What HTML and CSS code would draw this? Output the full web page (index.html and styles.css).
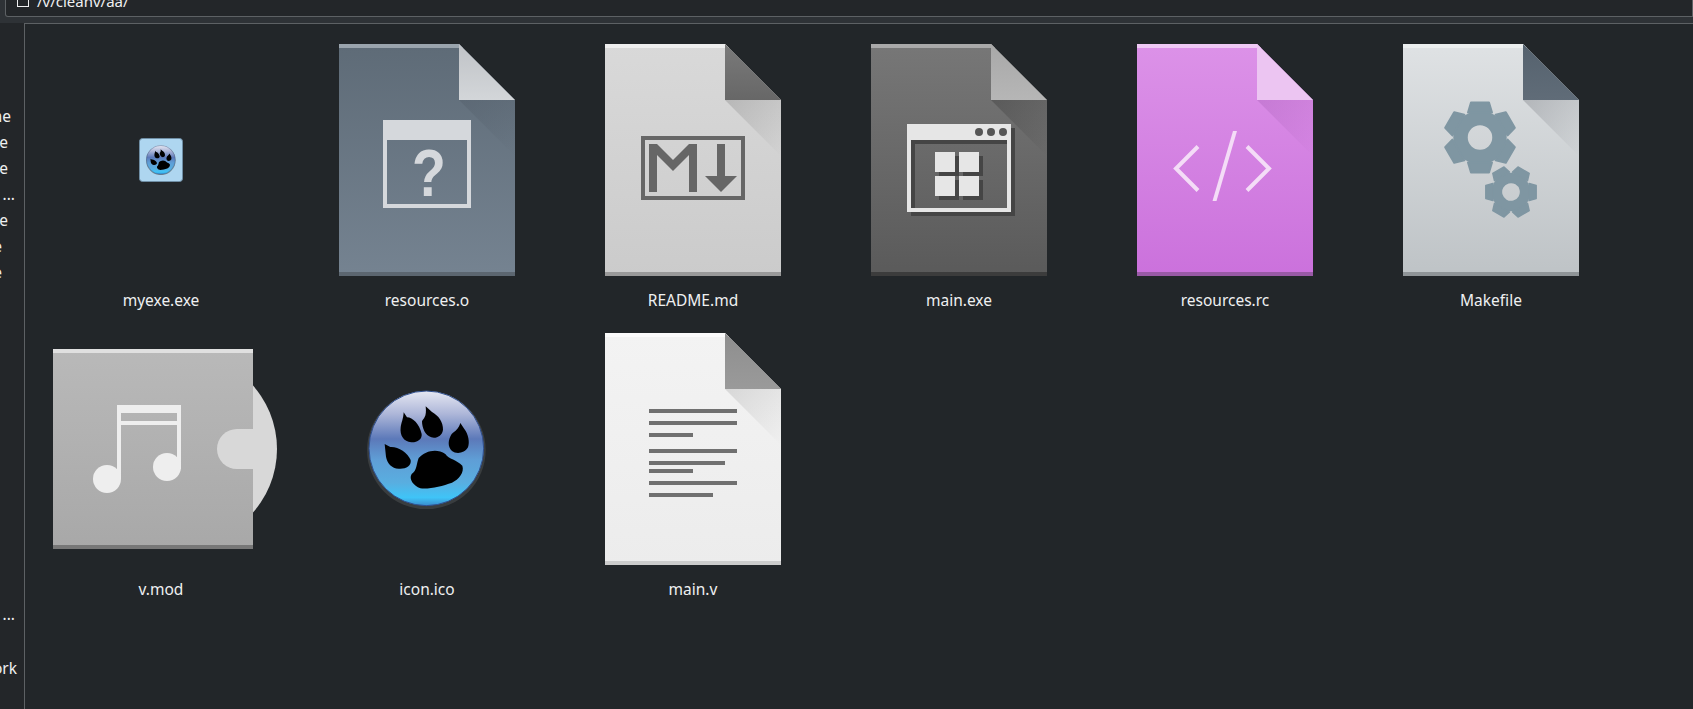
FILE: index.html
```html
<!DOCTYPE html>
<html lang="en">
<head>
  <meta charset="UTF-8" />
  <meta name="viewport" content="width=device-width, initial-scale=1.0" />
  <title>aa</title>
  <link rel="stylesheet" href="styles.css">
</head>
<body>
  <header class="topbar">
    <div class="pathbar">
      <span class="path-check"></span>
      <span class="path-text">/v/cleanv/aa/</span>
    </div>
  </header>

  <div class="content">
    <nav class="sidebar">
      <div class="side-top">
        <div class="side-item end-11">Home</div>
        <div class="side-item end-8">Archive</div>
        <div class="side-item end-8">Trace</div>
        <div class="side-item end-15">...</div>
        <div class="side-item end-8">Save</div>
        <div class="side-item end-2">Share</div>
        <div class="side-item end-2">Store</div>
      </div>
      <div class="side-bottom">
        <div class="side-item end-15">...</div>
        <div class="side-item end-7 side-gap">Network</div>
      </div>
    </nav>

    <main class="files">
      <div class="file">
        <div class="file-icon">
          <svg width="44" height="44" viewBox="0 0 44 44">
            <defs>
              <linearGradient id="paw-glass" gradientUnits="userSpaceOnUse" x1="0" y1="60" x2="0" y2="405">
                <stop offset="0" stop-color="#e6e8f2"/>
                <stop offset="0.2" stop-color="#aeb7d9"/>
                <stop offset="0.42" stop-color="#5c79b9"/>
                <stop offset="0.6" stop-color="#5f9ed6"/>
                <stop offset="0.8" stop-color="#59aee0"/>
                <stop offset="0.93" stop-color="#3fc4f7"/>
                <stop offset="1" stop-color="#3a8ccc"/>
              </linearGradient>
              <symbol id="paw" viewBox="50 55 360 360">
                <circle cx="228" cy="238" r="178" fill="#4a4c4e" opacity="0.6"/>
                <circle cx="228" cy="233" r="172" fill="url(#paw-glass)" stroke="#30508f" stroke-width="3"/>
                <path fill="#000" d="M160 125L170 140C187 140 207 160 214 190C216 206 200 216 183 215C160 213 148 195 151 170C153 155 159 145 160 125Z"/>
                <path fill="#000" d="M226 107L245 124C264 134 279 155 278 177C276 196 258 204 243 200C225 195 215 172 215 152C219 144 230 140 226 107Z"/>
                <path fill="#000" d="M330 157L342 175C354 190 359 215 353 230C343 248 318 251 305 241C291 228 293 208 304 190C315 180 325 175 330 157Z"/>
                <path fill="#000" d="M103 220L120 229C142 227 172 245 181 268C184 286 165 296 145 294C124 293 111 278 107 258Z"/>
                <path fill="#000" d="M205 262C225 240 260 232 285 250C295 265 320 268 336 285C343 305 325 326 305 336C275 346 240 356 210 353C190 346 174 325 184 310C200 300 198 280 205 262Z"/>
              </symbol>
            </defs>
            <rect x="0.5" y="0.5" width="43" height="43" rx="3" fill="#aed6f0" stroke="#6f8ea5"/>
            <use href="#paw" x="7" y="7" width="30" height="30"/>
          </svg>
        </div>
        <div class="file-name">myexe.exe</div>
      </div>

      <div class="file">
        <div class="file-icon">
          <svg width="176" height="232" viewBox="0 0 176 232">
            <defs>
              <linearGradient id="o-body" x1="0" y1="0" x2="0" y2="1"><stop offset="0" stop-color="#5e6b77"/><stop offset="1" stop-color="#758391"/></linearGradient>
              <linearGradient id="o-fold" x1="0" y1="0" x2="0" y2="1"><stop offset="0" stop-color="#c0c3c7"/><stop offset="1" stop-color="#d3d6d9"/></linearGradient>
              <linearGradient id="o-shade" x1="0" y1="0" x2="1" y2="1"><stop offset="0" stop-color="#4f5a66" stop-opacity="0.35"/><stop offset="1" stop-color="#4f5a66" stop-opacity="0"/></linearGradient>
            </defs>
            <path d="M0 0H120L176 56V232H0Z" fill="url(#o-body)"/>
            <path d="M120 56H176V112Z" fill="url(#o-shade)"/>
            <path d="M0 0H120L124 4H0Z" fill="#9aa4ad"/>
            <rect y="228" width="176" height="4" fill="#5c6670"/>
            <path d="M120 0L176 56H120Z" fill="url(#o-fold)"/>
            <path fill="#d5d8dc" fill-rule="evenodd" d="M44 76H132V164H44ZM48 96V160H128V96Z"/>
            <text class="glyph-q" transform="translate(90 152) scale(0.84 1)" text-anchor="middle">?</text>
          </svg>
        </div>
        <div class="file-name">resources.o</div>
      </div>

      <div class="file">
        <div class="file-icon">
          <svg width="176" height="232" viewBox="0 0 176 232">
            <defs>
              <linearGradient id="md-body" x1="0" y1="0" x2="0" y2="1"><stop offset="0" stop-color="#d9d9d9"/><stop offset="1" stop-color="#cbcbcb"/></linearGradient>
              <linearGradient id="md-fold" x1="0" y1="0" x2="0" y2="1"><stop offset="0" stop-color="#7a7a7a"/><stop offset="1" stop-color="#676767"/></linearGradient>
              <linearGradient id="md-shade" x1="0" y1="0" x2="1" y2="1"><stop offset="0" stop-color="#999" stop-opacity="0.5"/><stop offset="1" stop-color="#999" stop-opacity="0"/></linearGradient>
            </defs>
            <path d="M0 0H120L176 56V232H0Z" fill="url(#md-body)"/>
            <path d="M120 56H176V112Z" fill="url(#md-shade)"/>
            <path d="M0 0H120L124 4H0Z" fill="#eeeeee"/>
            <rect y="228" width="176" height="4" fill="#999999"/>
            <path d="M120 0L176 56H120Z" fill="url(#md-fold)"/>
            <rect x="38" y="94" width="100" height="60" fill="none" stroke="#666" stroke-width="4"/>
            <path fill="#666" d="M44 100H52L68 116L84 100H92V148H84V111L68 127L52 111V148H44Z"/>
            <path fill="#666" d="M112 100H120V132H132L116 148L100 132H112Z"/>
          </svg>
        </div>
        <div class="file-name">README.md</div>
      </div>

      <div class="file">
        <div class="file-icon">
          <svg width="176" height="232" viewBox="0 0 176 232">
            <defs>
              <linearGradient id="exe-body" x1="0" y1="0" x2="0" y2="1"><stop offset="0" stop-color="#777777"/><stop offset="1" stop-color="#5a5a5a"/></linearGradient>
              <linearGradient id="exe-fold" x1="0" y1="0" x2="0" y2="1"><stop offset="0" stop-color="#a8a8a8"/><stop offset="1" stop-color="#b6b6b6"/></linearGradient>
              <linearGradient id="exe-shade" x1="0" y1="0" x2="1" y2="1"><stop offset="0" stop-color="#444" stop-opacity="0.5"/><stop offset="1" stop-color="#444" stop-opacity="0"/></linearGradient>
              <g id="exe-win">
                <path fill-rule="evenodd" d="M36 80H140V168H36ZM40 96V164H136V96Z"/>
                <path d="M64 108H84V128H64ZM88 108H108V128H88ZM64 132H84V152H64ZM88 132H108V152H88Z"/>
              </g>
            </defs>
            <path d="M0 0H120L176 56V232H0Z" fill="url(#exe-body)"/>
            <path d="M120 56H176V112Z" fill="url(#exe-shade)"/>
            <path d="M0 0H120L124 4H0Z" fill="#a9a9a9"/>
            <rect y="228" width="176" height="4" fill="#3c3c3c"/>
            <path d="M120 0L176 56H120Z" fill="url(#exe-fold)"/>
            <use href="#exe-win" x="4" y="4" fill="#454545"/>
            <use href="#exe-win" fill="#e6e6e6"/>
            <circle cx="108" cy="88" r="4" fill="#555"/>
            <circle cx="120" cy="88" r="4" fill="#555"/>
            <circle cx="132" cy="88" r="4" fill="#555"/>
          </svg>
        </div>
        <div class="file-name">main.exe</div>
      </div>

      <div class="file">
        <div class="file-icon">
          <svg width="176" height="232" viewBox="0 0 176 232">
            <defs>
              <linearGradient id="rc-body" x1="0" y1="0" x2="0" y2="1"><stop offset="0" stop-color="#dc92e8"/><stop offset="1" stop-color="#cb71dc"/></linearGradient>
              <linearGradient id="rc-shade" x1="0" y1="0" x2="1" y2="1"><stop offset="0" stop-color="#a860b8" stop-opacity="0.38"/><stop offset="1" stop-color="#a860b8" stop-opacity="0"/></linearGradient>
            </defs>
            <path d="M0 0H120L176 56V232H0Z" fill="url(#rc-body)"/>
            <path d="M120 56H176V112Z" fill="url(#rc-shade)"/>
            <path d="M0 0H120L124 4H0Z" fill="#efc8f4"/>
            <rect y="228" width="176" height="4" fill="#995aa6"/>
            <path d="M120 0L176 56H120Z" fill="#ecc5f2"/>
            <path d="M61 102.5L39 124.5L61 146.5M110 102.5L132 124.5L110 146.5" fill="none" stroke="#f4dcf7" stroke-width="4"/>
            <path d="M96 87H100L79.5 157H75.5Z" fill="#f4dcf7"/>
          </svg>
        </div>
        <div class="file-name">resources.rc</div>
      </div>

      <div class="file">
        <div class="file-icon">
          <svg width="176" height="232" viewBox="0 0 176 232">
            <defs>
              <linearGradient id="mk-body" x1="0" y1="0" x2="0" y2="1"><stop offset="0" stop-color="#dfe2e4"/><stop offset="1" stop-color="#bec3c6"/></linearGradient>
              <linearGradient id="mk-fold" x1="0" y1="0" x2="0" y2="1"><stop offset="0" stop-color="#55626e"/><stop offset="1" stop-color="#606c78"/></linearGradient>
              <linearGradient id="mk-shade" x1="0" y1="0" x2="1" y2="1"><stop offset="0" stop-color="#9a9da2" stop-opacity="0.6"/><stop offset="1" stop-color="#9a9da2" stop-opacity="0"/></linearGradient>
              <path id="tooth" d="M-12 -25L-9 -35H9L12 -25Z" fill="#7f96a2" stroke="#7f96a2" stroke-width="2" stroke-linejoin="round"/>
              <g id="gear">
                <circle r="19.5" fill="none" stroke="#7f96a2" stroke-width="14.5"/>
                <use href="#tooth"/>
                <use href="#tooth" transform="rotate(60)"/>
                <use href="#tooth" transform="rotate(120)"/>
                <use href="#tooth" transform="rotate(180)"/>
                <use href="#tooth" transform="rotate(240)"/>
                <use href="#tooth" transform="rotate(300)"/>
              </g>
            </defs>
            <path d="M0 0H120L176 56V232H0Z" fill="url(#mk-body)"/>
            <path d="M120 56H176V112Z" fill="url(#mk-shade)"/>
            <path d="M0 0H120L124 4H0Z" fill="#ebeeee"/>
            <rect y="228" width="176" height="4" fill="#8f9497"/>
            <path d="M120 0L176 56H120Z" fill="url(#mk-fold)"/>
            <use href="#gear" transform="translate(77 93.5)"/>
            <use href="#gear" transform="translate(108 148) scale(0.72) rotate(30)"/>
          </svg>
        </div>
        <div class="file-name">Makefile</div>
      </div>

      <div class="file">
        <div class="file-icon">
          <svg width="232" height="232" viewBox="0 0 232 232">
            <defs>
              <linearGradient id="mod-body" x1="0" y1="0" x2="0" y2="1"><stop offset="0" stop-color="#b9b9b9"/><stop offset="1" stop-color="#a8a8a8"/></linearGradient>
            </defs>
            <circle cx="136" cy="116" r="96" fill="#d8d8d8"/>
            <rect x="8" y="16" width="200" height="200" fill="url(#mod-body)"/>
            <rect x="8" y="16" width="200" height="4" fill="#e0e0e0"/>
            <rect x="8" y="212" width="200" height="4" fill="#777777"/>
            <path d="M208 96H192A20 20 0 0 0 192 136H208Z" fill="#d8d8d8"/>
            <path fill="#eeeeee" fill-rule="evenodd" d="M72 72H136V136H132V92H76V146H72ZM76 80V88H132V80Z"/>
            <circle cx="62" cy="146" r="14" fill="#eeeeee"/>
            <circle cx="122" cy="134" r="14" fill="#eeeeee"/>
          </svg>
        </div>
        <div class="file-name">v.mod</div>
      </div>

      <div class="file">
        <div class="file-icon">
          <svg width="120" height="120" viewBox="0 0 120 120">
            <use href="#paw" width="120" height="120"/>
          </svg>
        </div>
        <div class="file-name">icon.ico</div>
      </div>

      <div class="file">
        <div class="file-icon">
          <svg width="176" height="232" viewBox="0 0 176 232">
            <defs>
              <linearGradient id="v-body" x1="0" y1="0" x2="0" y2="1"><stop offset="0" stop-color="#f3f3f3"/><stop offset="1" stop-color="#ececec"/></linearGradient>
              <linearGradient id="v-fold" x1="0" y1="0" x2="0" y2="1"><stop offset="0" stop-color="#8e8e8e"/><stop offset="1" stop-color="#9a9a9a"/></linearGradient>
              <linearGradient id="v-shade" x1="0" y1="0" x2="1" y2="1"><stop offset="0" stop-color="#ccc" stop-opacity="0.7"/><stop offset="1" stop-color="#ccc" stop-opacity="0"/></linearGradient>
            </defs>
            <path d="M0 0H120L176 56V232H0Z" fill="url(#v-body)"/>
            <path d="M120 56H176V112Z" fill="url(#v-shade)"/>
            <path d="M0 0H120L124 4H0Z" fill="#fbfbfb"/>
            <rect y="228" width="176" height="4" fill="#cccccc"/>
            <path d="M120 0L176 56H120Z" fill="url(#v-fold)"/>
            <path fill="#707070" d="M44 76H132V80H44ZM44 88H132V92H44ZM44 100H88V104H44ZM44 116H132V120H44ZM44 128H120V132H44ZM44 136H88V140H44ZM44 148H132V152H44ZM44 160H108V164H44Z"/>
          </svg>
        </div>
        <div class="file-name">main.v</div>
      </div>
    </main>
  </div>
</body>
</html>
```

FILE: styles.css
```css
* {
  box-sizing: border-box;
}

body {
  margin: 0;
  height: 709px;
  overflow: hidden;
  display: flex;
  flex-direction: column;
  background: #2e3236;
  color: #eff0f1;
  font-family: "Noto Sans", sans-serif;
  font-size: 15.5px;
}

.topbar {
  height: 23px;
  flex: none;
  padding-left: 5px;
  overflow: hidden;
}

.pathbar {
  height: 17px;
  display: flex;
  align-items: flex-end;
  gap: 8px;
  padding: 0 0 9px 11px;
  background: #232629;
  border: 1px solid #5d6164;
  border-top: none;
  border-radius: 0 0 0 3px;
}

.path-check {
  flex: none;
  width: 12px;
  height: 12px;
  border: 1px solid #eff0f1;
}

.path-text {
  font-size: 15px;
  line-height: 16px;
  margin-bottom: -2px;
  color: #eff0f1;
}

.content {
  flex: 1;
  display: flex;
  min-height: 0;
}

.sidebar {
  width: 24px;
  flex: none;
  background: #232629;
  overflow: hidden;
  display: flex;
  flex-direction: column;
  padding-top: 80px;
}

.side-item {
  height: 26px;
  line-height: 26px;
  display: flex;
  justify-content: flex-end;
  white-space: nowrap;
}

.side-bottom {
  margin-top: 316px;
}

.side-gap {
  margin-top: 28px;
}

.end-2 { padding-right: 22px; }
.end-7 { padding-right: 7px; }
.end-8 { padding-right: 16px; }
.end-11 { padding-right: 13px; }
.end-15 { padding-right: 9px; }

.files {
  flex: 1;
  background: #222629;
  border-top: 1px solid #5d6164;
  border-left: 1px solid #5d6164;
  padding: 20px 0 0 3px;
  display: grid;
  grid-template-columns: repeat(6, 266px);
  grid-auto-rows: 289px;
  align-content: start;
}

.file {
  display: flex;
  flex-direction: column;
  align-items: center;
}

.file-icon {
  width: 232px;
  height: 232px;
  display: flex;
  align-items: center;
  justify-content: center;
}

.file-icon svg {
  display: block;
  flex: none;
}

.file-name {
  margin-top: 12px;
  line-height: 24px;
  text-align: center;
}

.glyph-q {
  font-family: "Liberation Sans", Arial, sans-serif;
  font-weight: 700;
  font-size: 66px;
  fill: #d5d8dc;
}
```
